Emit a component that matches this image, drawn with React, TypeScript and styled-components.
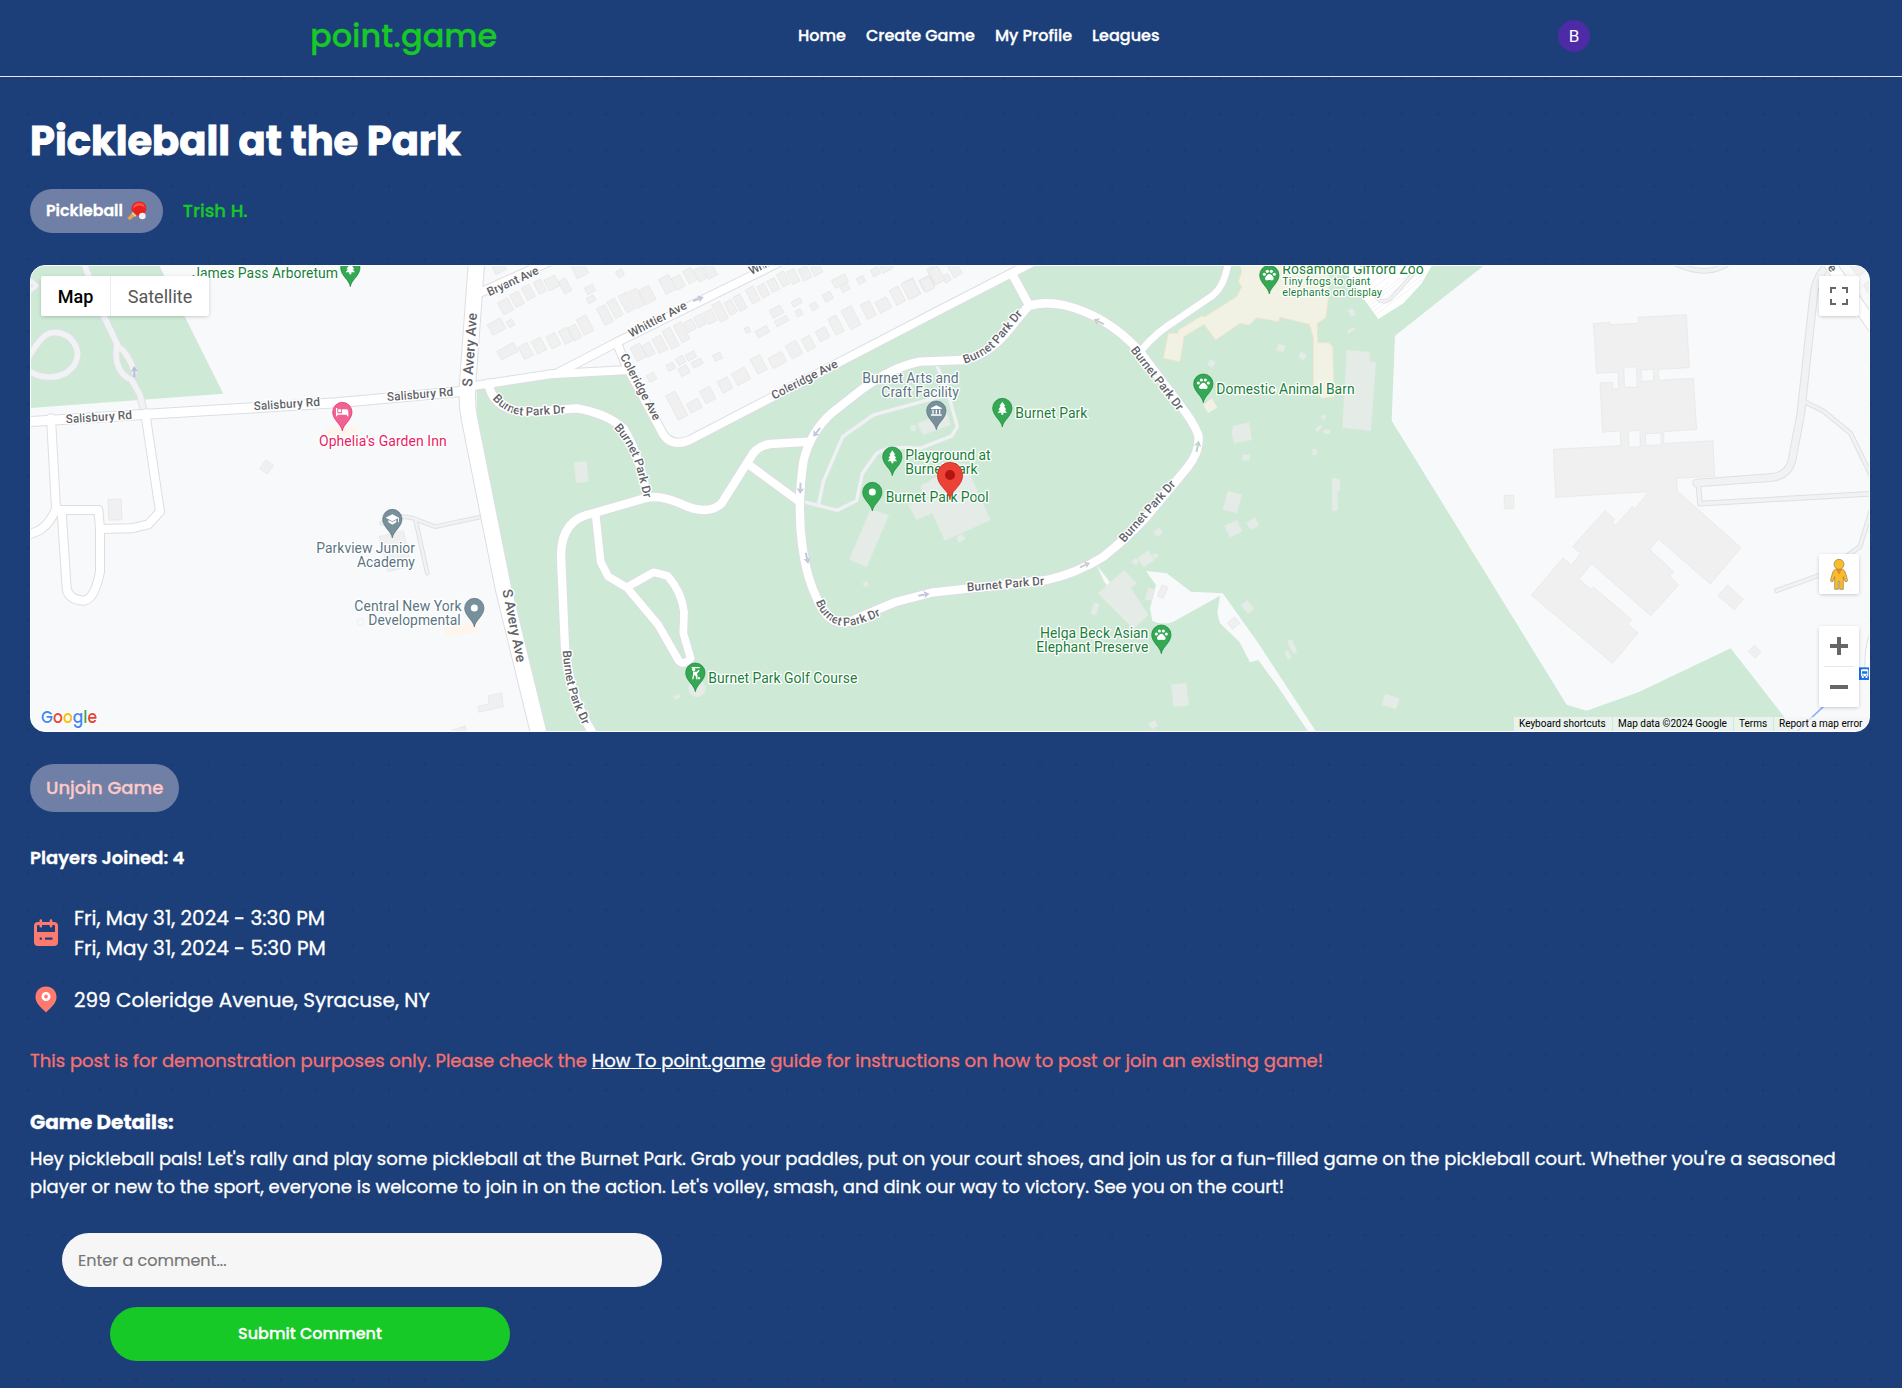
import React from 'react';
import styled, { createGlobalStyle, css } from 'styled-components';

const brand = {
  navy: '#1c3f79',
  green: '#16c926',
  coral: '#ff7a6e',
};

const GlobalStyle = createGlobalStyle`
  *, *::before, *::after { box-sizing: border-box; }
  body {
    margin: 0;
    background-color: ${brand.navy};
    background-image: radial-gradient(circle at 2px 2px, #19396f 1.2px, transparent 1.7px);
    background-size: 36.17px 36.17px;
    background-position: 25.5px 76px;
    color: #fff;
    font-family: Poppins, Inter, 'Open Sans', sans-serif;
    font-feature-settings: 'cv11';
    -webkit-text-stroke: 0.3px currentColor;
    min-height: 100vh;
  }
  button, input { font: inherit; color: inherit; border: 0; }
`;

/* ---------- header ---------- */

const Header = styled.header`
  background: ${brand.navy};
  border-bottom: 1px solid #e9eaf0;
  height: 77px;
  padding-bottom: 5px;
`;

const HeaderInner = styled.div`
  display: flex;
  align-items: center;
  width: 1280px;
  height: 100%;
  margin: 0 auto 0 310px;
`;

const Logo = styled.a`
  width: 188px;
  color: ${brand.green};
  font-size: 32px;
  font-weight: 500;
  line-height: 48px;
  white-space: nowrap;
`;

const Nav = styled.nav`
  display: flex;
  gap: 20px;
  margin-left: 300px;
  font-size: 16px;
  font-weight: 500;
  line-height: 24px;
  white-space: nowrap;
`;

const NavLink = styled.a`
  color: #fff;
`;

const Avatar = styled.div`
  display: grid;
  place-items: center;
  width: 32px;
  height: 32px;
  margin-left: auto;
  border-radius: 50%;
  background: #4d2ba6;
  font: 400 17px/32px Roboto, sans-serif;
  -webkit-text-stroke: 0;
`;

/* ---------- page body ---------- */

const Page = styled.main`
  display: flex;
  flex-direction: column;
  align-items: flex-start;
  padding: 34px 32px 27px 30px;
`;

const Title = styled.h1`
  margin: 0;
  font-size: 40px;
  font-weight: 700;
  line-height: 60px;
  -webkit-text-stroke: 0.9px currentColor;
`;

const TagRow = styled.div`
  display: flex;
  align-items: center;
  gap: 20px;
  margin-top: 18px;
`;

const pill = css`
  display: flex;
  align-items: center;
  border-radius: 24px;
  background: rgba(238, 225, 233, 0.4);
  padding: 0 16px 1px;
  white-space: nowrap;
`;

const SportTag = styled.span`
  ${pill}
  gap: 4px;
  height: 44px;
  font-size: 15.75px;
  font-weight: 600;
`;

const Host = styled.a`
  padding-bottom: 2px;
  color: ${brand.green};
  font-size: 18px;
  font-weight: 500;
`;

const UnjoinButton = styled.button`
  ${pill}
  height: 48px;
  margin-top: 32px;
  color: #fcc9c9;
  font-size: 18px;
  font-weight: 500;
`;

const Players = styled.p`
  margin: 32px 0 0;
  font-size: 18px;
  font-weight: 600;
  line-height: 27px;
`;

const InfoRow = styled.div<{ $top: number }>`
  display: flex;
  align-items: center;
  gap: 13px;
  margin-top: ${(p) => p.$top}px;
  font-size: 20px;
  line-height: 30px;
`;

const Notice = styled.p`
  margin: 32px 0 0;
  color: #f87171;
  font-size: 18px;
  line-height: 27px;
`;

const GuideLink = styled.a`
  color: #fff;
  text-decoration: underline;
`;

const DetailsHeading = styled.h2`
  margin: 33px 0 0;
  font-size: 20px;
  font-weight: 700;
  line-height: 30px;
`;

const Details = styled.p`
  margin: 8px 0 0;
  font-size: 18px;
  line-height: 28px;
`;

const CommentForm = styled.form`
  display: flex;
  flex-direction: column;
  gap: 20px;
  width: 600px;
  margin: 32px 0 0 32px;
`;

const CommentInput = styled.input`
  height: 54px;
  padding: 0 16px;
  border-radius: 27px;
  background: #f6f6f6;
  font-size: 16px;
  &::placeholder { color: #757575; opacity: 1; -webkit-text-stroke: 0.15px #757575; }
`;

const SubmitButton = styled.button`
  width: 400px;
  height: 54px;
  margin-left: 48px;
  padding-bottom: 2px;
  border-radius: 27px;
  background: ${brand.green};
  font-size: 16px;
  font-weight: 500;
`;

/* ---------- map ---------- */

const MapFrame = styled.section`
  position: relative;
  width: 100%;
  height: 467px;
  margin-top: 32px;
  overflow: hidden;
  border: 1px solid #fff;
  border-radius: 15px;
  background: #f8f9fb;
  font-family: Roboto, sans-serif;
  font-feature-settings: normal;
  -webkit-text-stroke: 0;
`;

const MapCanvas = styled.svg`
  display: block;
  width: 1838px;
  height: 465px;
`;

const controlSurface = css`
  position: absolute;
  background: #fff;
  border-radius: 2px;
  box-shadow: 0 1px 4px -1px rgba(0, 0, 0, 0.3);
`;

const MapTypeBar = styled.div`
  ${controlSurface}
  top: 10px;
  left: 10px;
  display: flex;
  height: 40px;
`;

const MapTypeButton = styled.button<{ $active?: boolean }>`
  width: ${(p) => (p.$active ? 69 : 99)}px;
  padding: 0;
  background: none;
  color: ${(p) => (p.$active ? '#000' : '#565656')};
  font-size: 18px;
  font-weight: ${(p) => (p.$active ? 500 : 400)};
  border-left: ${(p) => (p.$active ? 'none' : '1px solid #ececec')};
`;

const ControlButton = styled.div<{ $top: number }>`
  ${controlSurface}
  top: ${(p) => p.$top}px;
  right: 10px;
  display: grid;
  place-items: center;
  width: 40px;
  height: 40px;
`;

const ZoomControl = styled.div`
  ${controlSurface}
  top: 360px;
  right: 10px;
  display: grid;
  grid-template-rows: 40px 1px 40px;
  place-items: center;
  width: 40px;
`;

const ZoomRule = styled.div`
  width: 30px;
  height: 1px;
  background: #e6e6e6;
`;

const Attribution = styled.div`
  position: absolute;
  right: 0;
  bottom: 0;
  display: flex;
  gap: 1px;
  height: 14px;
  color: #000;
  font-size: 10px;
  line-height: 14px;
  white-space: nowrap;
`;

const Credit = styled.span<{ $w: number }>`
  width: ${(p) => p.$w}px;
  padding-left: 5px;
  background: rgba(245, 245, 245, 0.7);
`;

const PARK = '#ceead6';
const ROAD_TEXT = '#5f6368';

type Box = [number, number, number, number, number?];

/* The canvas is split in four sheets, each drawn at three units per pixel. */
const SHEETS = { west: 20, park: 460, zoo: 900, east: 1380 };
type SheetName = keyof typeof SHEETS;

const Sheet = ({ at, children }: { at: SheetName; children: React.ReactNode }) => (
  <g transform={`translate(${SHEETS[at]} 255) scale(0.33333)`}>{children}</g>
);

type Road = { at: SheetName; d: string; w: number; kind?: 'street' | 'lane' | 'path' };

const ROADS: Road[] = [
  { at: 'west', d: 'M25 308C70 232 90 230 112 233C165 240 175 290 172 305C165 350 120 366 90 366Q55 366 30 350', w: 17, kind: 'lane' },
  { at: 'west', d: 'M190 20L250 180L295 275Q325 295 343 350', w: 17, kind: 'lane' },
  { at: 'west', d: 'M290 275Q280 350 335 375L360 420L373 475', w: 17, kind: 'lane' },
  { at: 'west', d: 'M30 75L50 92L30 108', w: 12, kind: 'lane' },
  { at: 'west', d: 'M1085 805Q1130 775 1180 790L1245 815L1395 783', w: 8, kind: 'lane' },
  { at: 'west', d: 'M1187 797L1222 955', w: 8, kind: 'lane' },
  { at: 'zoo', d: 'M60 580L155 543L172 515L140 400L112 335', w: 9, kind: 'path' },
  { at: 'park', d: 'M1030 740L1132 766L1190 737L1207 655L1250 595Q1290 570 1380 580', w: 9, kind: 'path' },
  { at: 'park', d: 'M1075 752L1090 680L1148 545L1240 480L1440 425', w: 9, kind: 'path' },
  { at: 'east', d: 'M885 25Q980 70 1045 25', w: 11, kind: 'lane' },
  { at: 'east', d: 'M1355 20Q1305 60 1300 130L1262 480L1235 620Q1222 664 1170 668L950 684', w: 20, kind: 'lane' },
  { at: 'east', d: 'M955 692L960 746L1475 716', w: 11, kind: 'lane' },
  { at: 'east', d: 'M1273 440L1330 468L1412 535L1475 665', w: 9, kind: 'lane' },
  { at: 'east', d: 'M1475 760L1440 875L1320 960L1190 1007', w: 9, kind: 'lane' },
  { at: 'east', d: 'M1490 1120Q1465 1160 1466 1240', w: 20 },
  { at: 'east', d: 'M1345 20L1480 215', w: 34 },
  { at: 'west', d: 'M93 490L108 760Q95 800 60 825L20 842', w: 24 },
  { at: 'west', d: 'M108 765L235 765L240 820L240 950Q225 1030 193 1037Q145 1035 140 1000L125 770', w: 24 },
  { at: 'west', d: 'M240 822L335 820L385 808L420 770L376 475', w: 24 },
  { at: 'west', d: 'M20 500L380 478L950 443L1340 408', w: 27 },
  { at: 'park', d: 'M28 395L270 358L505 345', w: 24 },
  { at: 'park', d: 'M290 356L470 262L900 50L990 5', w: 24 },
  { at: 'park', d: 'M40 122L290 10', w: 24 },
  { at: 'park', d: 'M470 262L500 335L605 530Q630 580 690 555L1440 165L1780 -10', w: 24 },
  { at: 'park', d: 'M85 385Q100 470 210 470L350 460Q440 475 490 520Q540 600 562 728', w: 25 },
  { at: 'park', d: 'M405 1445Q330 1330 315 1180L303 900Q305 790 400 775L560 728Q600 720 660 745Q740 785 785 745L870 610Q890 572 930 567L1050 560', w: 25 },
  { at: 'park', d: 'M865 628L1018 740', w: 24 },
  { at: 'park', d: 'M407 780L422 920L445 965L500 997L595 1110L655 1215Q670 1235 692 1210L670 1135L672 1070Q665 1010 622 962L580 952L500 997', w: 23 },
  { at: 'zoo', d: 'M385 153L330 220Q270 300 190 315L60 320Q-20 335 -110 400L-200 470Q-270 530 -290 620Q-310 760 -292 880Q-280 970 -245 1040Q-210 1115 -150 1100Q-60 1060 -10 1040L100 1012L440 975Q530 955 610 905Q680 850 740 785L860 640Q902 590 895 540Q880 500 840 450L720 290Q620 180 490 150Q430 138 385 153Z', w: 25 },
  { at: 'zoo', d: 'M387 150L335 55', w: 25 },
  { at: 'zoo', d: 'M722 288Q770 230 830 195L940 120Q975 90 985 20', w: 20 },
  { at: 'park', d: 'M50 15L24 370Q18 440 28 490L130 1000L240 1450', w: 46 },
];

const casing = { street: '#dcdee3', lane: '#dfe0e4', path: '#e6ebe8' };
const surface = { street: '#ffffff', lane: '#f1f2f4', path: '#f0f1f4' };

const Roads = () => (
  <>
    {(['path', 'lane', 'street'] as const).map((kind) => (
      <g key={kind} fill="none" strokeLinejoin="round" strokeLinecap="round">
        {[6, 0].map((edge) =>
          ROADS.filter((r) => (r.kind ?? 'street') === kind).map((r, i) => (
            <Sheet key={`${edge}-${i}`} at={r.at}>
              <path
                d={r.d}
                stroke={edge ? casing[kind] : surface[kind]}
                strokeWidth={r.w + (kind === 'path' ? edge / 3 : edge)}
              />
            </Sheet>
          )),
        )}
      </g>
    ))}
  </>
);

const HOUSES: Box[] = [
  [137, 154, 34, 40], [171, 133, 28, 42], [205, 112, 26, 42], [240, 95, 24, 40], [276, 84, 36, 36], [315, 93, 24, 42],
  [360, 45, 38, 40], [118, 40, 36, 24], [110, 215, 44, 36], [152, 205, 18, 20], [390, 103, 26, 22], [393, 133, 24, 18], [480, 55, 20, 20],
  [142, 289, 56, 30], [197, 288, 30, 42], [237, 272, 30, 42], [280, 257, 30, 40], [318, 242, 28, 44], [345, 232, 24, 44], [375, 210, 32, 52],
  [435, 180, 28, 56], [465, 160, 26, 56], [500, 142, 28, 56], [530, 130, 26, 56], [562, 120, 34, 48], [622, 88, 34, 50], [655, 82, 28, 38],
  [690, 62, 26, 42], [720, 58, 24, 40], [750, 48, 30, 40],
  [535, 292, 32, 46], [565, 284, 26, 38], [600, 268, 28, 48], [632, 250, 26, 62], [665, 232, 26, 58], [690, 212, 28, 32], [720, 197, 26, 34],
  [750, 185, 28, 38], [780, 170, 26, 58], [812, 157, 24, 42], [840, 143, 24, 48], [878, 120, 26, 48], [910, 107, 24, 38], [940, 90, 24, 38],
  [970, 72, 24, 42], [1000, 65, 24, 42], [1035, 55, 28, 38], [1070, 45, 28, 28],
  [575, 367, 24, 22], [632, 335, 22, 20], [662, 316, 24, 22], [693, 303, 28, 20], [712, 324, 32, 18], [672, 347, 28, 26], [773, 305, 24, 20],
  [862, 225, 14, 16], [907, 230, 38, 22], [950, 170, 36, 26], [965, 198, 40, 18], [1010, 142, 30, 16], [1017, 173, 18, 18], [1062, 154, 20, 20],
  [1103, 125, 26, 24], [1140, 78, 44, 26], [1155, 98, 24, 20], [1203, 75, 22, 20], [1247, 50, 24, 22], [1280, 38, 34, 20],
  [650, 452, 32, 82], [703, 452, 38, 30], [743, 420, 34, 42], [795, 390, 34, 38], [843, 364, 44, 40], [896, 328, 32, 50], [952, 315, 46, 34],
  [1002, 284, 36, 44], [1045, 265, 28, 40], [1088, 238, 32, 34], [1128, 210, 28, 54], [1173, 188, 34, 64], [1225, 165, 30, 48], [1270, 150, 38, 36],
  [1312, 122, 30, 50], [1355, 100, 34, 54], [1400, 85, 36, 36], [1425, 58, 30, 50], [1460, 70, 20, 22],
];

const ZOO_HOUSES: Box[] = [[32, 102, 38, 52], [82, 88, 30, 40], [110, 62, 32, 46], [165, 45, 28, 38]];

const PARK_SHEDS: Box[] = [
  [934, 325, 18, 18, 30], [1143, 279, 22, 20, 20], [1208, 303, 20, 18, 30], [1038, 608, 22, 17, 0], [997, 741, 44, 58, 15],
  [1000, 821, 42, 38, -25], [1058, 806, 30, 26, -30], [1270, 487, 14, 12, 40], [1256, 520, 10, 22, 40], [1281, 530, 18, 13, 0],
  [1244, 591, 13, 18, 0], [1355, 172, 16, 22, -30], [1353, 226, 24, 9, -30], [774, 832, 22, 18, -40], [738, 912, 40, 34, -35],
  [706, 920, 16, 16, 30], [766, 902, 14, 14, -35], [585, 1062, 17, 36, 15], [750, 1018, 20, 36, 15], [1043, 1056, 24, 34, -40],
  [1177, 1174, 14, 42, -25], [1164, 1200, 12, 26, -25], [840, 1320, 46, 68, -6], [760, 1409, 22, 20, -30], [1472, 1340, 44, 34, 18],
  [182, 850, 22, 18, -30], [40, 519, 16, 18, 15],
];

const Boxes = ({ list, tilt = 0 }: { list: Box[]; tilt?: number }) => (
  <>
    {list.map(([cx, cy, w, h, r], i) => (
      <rect key={i} x={cx - w / 2} y={cy - h / 2} width={w} height={h} transform={`rotate(${r ?? tilt} ${cx} ${cy})`} />
    ))}
  </>
);

const Terrain = () => (
  <>
    <Sheet at="west"><path d="M20 20L412 20L610 416L20 460Z" fill={PARK} /></Sheet>
    <Sheet at="park">
      <path
        d="M500 350L605 530L690 565L1440 165L1650 55L1710 20L3085 20L3070 33L2805 242L2795 497L3320 1349L3380 1367L3535 1312L3812 1180L4015 1440L262 1440L130 940L50 480L50 390L270 358Z"
        fill={PARK}
      />
    </Sheet>
    <Sheet at="zoo">
      <path d="M1018 20L1025 50L1015 80L1025 95L1010 125L915 185L905 183L835 225L833 235L805 235L790 310L840 320L852 245L912 208L947 255L1020 205L1048 210L1070 188L1135 200L1140 187L1228 208L1240 245L1240 400L1265 430L1303 425L1298 275L1285 263L1253 263L1252 205L1278 188L1285 130L1290 20Z" fill="#f1f2e3" stroke="#f6e2c2" strokeWidth="2" />
      <path d="M910 450L935 430L952 457L925 475Z" fill="#f1f2e3" />
      <path d="M1325 20L1345 60L1390 130L1435 192L1510 145L1565 85L1602 20Z" fill="#fff" />
      <g stroke="#e3e4e6" strokeWidth="1.5" fill="none">
        <path d="M1400 135L1470 80M1405 143L1500 70M1410 151L1540 50M1416 160L1570 40M1422 168L1575 55M1428 178L1565 75M1350 60L1400 20M1360 75L1430 20M1370 92L1460 22M1380 108L1490 25M1388 122L1520 25" />
        <path d="M1425 120Q1445 155 1475 128L1555 40" stroke="#dfe0e4" strokeWidth="12" />
        <path d="M1425 120Q1445 155 1475 128L1555 40" stroke="#f1f2f4" strokeWidth="7" />
      </g>
      <path d="M738 948L800 955L873 1010L968 1015L1075 1165L1255 1440L1232 1440L1130 1290L1075 1215L1050 1222L1018 1160L960 1105L952 1075L960 1022L820 1100Q790 1112 757 1098L750 1060L768 990Z" fill="#f8f9fb" />
      <path d="M590 930L632 985L625 998L610 975Z" fill="#f8f9fb" />
    </Sheet>
  </>
);

const Buildings = () => (
  <>
    <g fill="#f0f0f0" stroke="#e4e5e6" strokeWidth="2">
      <Sheet at="park">
        <Boxes list={HOUSES} tilt={-28} />
        <path d="M85 1322L125 1314L130 1355L57 1372L54 1354L86 1347ZM0 1418L16 1412L18 1440L0 1440Z" />
      </Sheet>
      <Sheet at="zoo"><Boxes list={ZOO_HOUSES} tilt={-28} /></Sheet>
      <Sheet at="west">
        <Boxes list={[[740, 636, 28, 32, 35], [285, 764, 40, 62, -2]]} />
        <path d="M1077 845L1150 827L1168 905L1168 935L1103 950L1095 910Z" />
        <path d="M1295 1425L1336 1414L1340 1440L1290 1440Z" />
      </Sheet>
      <Sheet at="east">
        <path
          fillRule="evenodd"
          d="M640 206L690 202L690 209L775 205L775 187L919 179L928 338L836 343L836 376L940 370L950 523L851 530L851 566L999 557L1004 663L890 670L892 708L1083 878L991 987L836 852L808 883L881 950L868 963L896 990L812 1082L635 926L596 972L632 1003L640 996L755 1094L742 1107L774 1134L698 1225L454 1021L549 909L574 930L602 895L578 875L675 767L704 793L696 802L707 811L757 755L765 761L806 710L527 727L520 583L723 572L720 528L668 532L660 384L697 382L699 403L716 400L714 351L650 355ZM731 337L769 335L772 397L734 397ZM784 345L820 343L821 377L785 380ZM745 528L780 526L781 575L747 577ZM796 536L843 534L844 570L797 572Z"
        />
        <path d="M373 721H401V761H373ZM1042 990L1090 1033L1063 1064L1014 1022ZM1122 1171L1143 1190L1127 1209L1104 1190ZM1410 33L1435 65L1475 35ZM1450 90L1465 78L1480 110L1462 112Z" />
      </Sheet>
    </g>
    <g fill="#fef5ec">
      <Sheet at="west"><path d="M917 518H1010V543H917ZM1272 1120L1370 1098L1370 1133L1310 1143L1303 1128L1300 1140L1277 1145Z" /></Sheet>
    </g>
    <g fill="#e5ece7" stroke="#dfe6e1" strokeWidth="1">
      <Sheet at="park">
        <Boxes list={[[364, 651, 38, 62, -6], [651, 1326, 20, 11, -25], [1217, 988, 14, 13, -20]]} />
        <path d="M1232 762L1287 780L1220 937L1167 913Z" />
        <circle cx="711" cy="1300" r="26" />
      </Sheet>
      <Sheet at="zoo">
        <Boxes list={PARK_SHEDS} />
        <path d="M62 692L110 665L112 630L195 625L272 795L135 857L115 815L97 775L48 795L25 750L70 730Z" />
        <path d="M52 505L140 470L152 510L68 540Z" />
        <path d="M1000 512L1048 502L1056 555L1003 565L994 530Z" />
        <path d="M1296 668L1320 672L1320 705L1313 710L1313 767L1296 767Z" />
        <path d="M1340 284L1410 291L1408 318L1428 322L1413 528L1327 518Z" />
        <path d="M593 1015L672 945L710 985L692 998L745 1080L700 1122Z" />
      </Sheet>
    </g>
    <g fill="#f0f0f0" stroke="#dcdcdc" strokeWidth="1.5">
      <Sheet at="zoo"><Boxes list={[[788, 1010, 18, 36, 25], [1001, 1104, 28, 24, -40]]} /></Sheet>
    </g>
    <Sheet at="east">
      <path d="M1250 1430L1330 1355" stroke="#8ab4f8" strokeWidth="5" />
      <rect x="1437" y="1237" width="34" height="38" fill="#1a73e8" />
      <path d="M1447 1243h14q4 0 4 4v17h-3v5h-5v-5h-6v5h-5v-5h-3v-17q0-4 4-4z" fill="#fff" />
      <path d="M1446 1249h16v7h-16zM1447 1259h4v3h-4zM1458 1259h4v3h-4z" fill="#1a73e8" />
    </Sheet>
  </>
);

const Arrow = ({ x, y, r, c = '#c3c7dc' }: { x: number; y: number; r: number; c?: string }) => (
  <g transform={`translate(${x} ${y}) rotate(${r})`} fill={c}>
    <path d="M-17 -3H2V3H-17ZM0 -11L17 0L0 11L3 0Z" />
  </g>
);

/* ---------- labels and markers ---------- */

type Glyph = 'tree' | 'paw' | 'dot' | 'bed' | 'cap' | 'museum' | 'golf';

const GLYPHS: Record<Glyph, React.ReactNode> = {
  tree: <path d="M0 -19L9 -6H5L12 5H7L14 14H3V20H-3V14H-14L-7 5H-12L-5 -6H-9Z" />,
  paw: (
    <>
      <circle cx="-15" cy="-2" r="4.6" /><circle cx="-6" cy="-11" r="4.8" /><circle cx="6" cy="-11" r="4.8" /><circle cx="15" cy="-2" r="4.6" />
      <path d="M0 -3C6 -3 8 3 12 7C15 12 11 17 6 16Q0 14 -6 16C-11 17 -15 12 -12 7C-8 3 -6 -3 0 -3Z" />
    </>
  ),
  dot: <circle r="10.5" />,
  bed: <path d="M-19 -12H-15V4H-1V-8H12Q18 -8 18 -1V13H14V8H-15V13H-19ZM-8 -9A5 5 0 1 1 -8 1A5 5 0 1 1 -8 -9Z" />,
  cap: <path d="M0 -14L20 -4V10H17V-2L0 7L-20 -4ZM-12 3L0 9L12 3V10L0 17L-12 10Z" />,
  museum: <path d="M0 -16L16 -8V-5H-16V-8ZM-12 -3H-8V9H-12ZM-2 -3H2V9H-2ZM8 -3H12V9H8ZM-16 11H16V15H-16Z" />,
  golf: <path d="M-11 -17H13V-13H-2A5 5 0 1 1 -8 -13H-11ZM-7 -3H4L10 -9L13 -6L5 3L7 9L6 20H2L1 10L-3 7L-6 20H-10L-7 6ZM11 13A3.5 3.5 0 1 1 11 20A3.5 3.5 0 1 1 11 13Z" />,
};

const Pin = ({ x, y, color, edge, glyph }: { x: number; y: number; color: string; edge: string; glyph: Glyph }) => (
  <g transform={`translate(${x} ${y})`}>
    <path d="M0 57C-3 36 -29 24 -29 0A29 29 0 1 1 29 0C29 24 3 36 0 57Z" fill={color} stroke={edge} strokeWidth="2" />
    <g fill="#fff">{GLYPHS[glyph]}</g>
  </g>
);

const GREEN = { color: '#34a853', edge: '#188038' };
const SLATE = { color: '#78909c', edge: '#546e7a' };

const MapText = styled.text<{ $tone: string; $size?: number; $weight?: number }>`
  fill: ${(p) => p.$tone};
  font-size: ${(p) => p.$size ?? 42}px;
  font-weight: ${(p) => p.$weight ?? 400};
  stroke: #fff;
  stroke-width: 8px;
  stroke-linejoin: round;
  paint-order: stroke;
`;

const Poi = ({ x, y, w, tone, size, children }: { x: number; y: number; w: number; tone: string; size?: number; children: string }) => (
  <MapText x={x} y={y} textLength={w} $tone={tone} $size={size}>{children}</MapText>
);

const RoadName = ({ id, d, size = 36, w, children }: { id: string; d: string; size?: number; w: number; children: string }) => (
  <>
    <path id={id} d={d} fill="none" />
    <MapText $tone={ROAD_TEXT} $size={size} $weight={500}>
      <textPath href={`#${id}`} textLength={w}>{children}</textPath>
    </MapText>
  </>
);

const forest = '#188038';
const slate = '#5b7583';

const Labels = () => (
  <>
    <Sheet at="west">
      <Arrow x={343} y={350} r={-90} c="#b9bedb" />
      <RoadName id="sal1" d="M138 505L343 491" w={199}>Salisbury Rd</RoadName>
      <RoadName id="sal2" d="M702 466L906 452" w={199}>Salisbury Rd</RoadName>
      <RoadName id="sal3" d="M1102 438L1310 421" w={199}>Salisbury Rd</RoadName>
      <Poi x={517} y={69} w={437} tone={forest}>James Pass Arboretum</Poi>
      <Pin x={991} y={38} {...GREEN} glyph="tree" />
      <Poi x={897} y={573} w={383} tone="#e91e63">Ophelia's Garden Inn</Poi>
      <Pin x={967} y={471} color="#f06292" edge="#e91e63" glyph="bed" />
      <Poi x={889} y={894} w={296} tone={slate}>Parkview Junior</Poi>
      <Poi x={1011} y={936} w={174} tone={slate}>Academy</Poi>
      <Pin x={1117} y={792} {...SLATE} glyph="cap" />
      <Poi x={1003} y={1068} w={322} tone={slate}>Central New York</Poi>
      <Poi x={1045} y={1110} w={277} tone={slate}>Developmental</Poi>
      <Pin x={1363} y={1059} {...SLATE} glyph="dot" />
      <circle cx="1022" cy="1101" r="10" fill="none" stroke="#e4e5e6" strokeWidth="1.5" />
    </Sheet>
    <Sheet at="park">
      <Arrow x={715} y={132} r={-20} />
      <Arrow x={1070} y={532} r={128} />
      <Arrow x={1021} y={700} r={92} />
      <Arrow x={1041} y={910} r={78} />
      <RoadName id="avery1" d="M36 396L52 165" size={42} w={222}>S Avery Ave</RoadName>
      <RoadName id="avery2" d="M127 1006L173 1237" size={42} w={222}>S Avery Ave</RoadName>
      <RoadName id="bryant" d="M88 124L250 50" w={166}>Bryant Ave</RoadName>
      <RoadName id="whittier" d="M513 248L700 150" w={192}>Whittier Ave</RoadName>
      <RoadName id="whittier2" d="M874 60L970 13" w={96}>Whittie</RoadName>
      <RoadName id="cole1" d="M479 304L588 510" w={220}>Coleridge Ave</RoadName>
      <RoadName id="cole2" d="M942 434L1160 322" w={218}>Coleridge Ave</RoadName>
      <RoadName id="bpd1" d="M97 432C128 466 160 484 215 482L345 472" w={234}>Burnet Park Dr</RoadName>
      <RoadName id="bpd2" d="M461 518C515 580 528 630 536 665L556 745" w={234}>Burnet Park Dr</RoadName>
      <RoadName id="bpd3" d="M308 1187C313 1270 330 1330 350 1370L388 1455" w={234}>Burnet Park Dr</RoadName>
      <RoadName id="bpd4" d="M1068 1040C1082 1085 1125 1118 1165 1113C1210 1107 1250 1088 1300 1062" w={234}>Burnet Park Dr</RoadName>
      <Poi x={1277} y={741} w={309} tone={forest}>Burnet Park Pool</Poi>
      <Poi x={1336} y={616} w={256} tone={forest}>Playground at</Poi>
      <Poi x={1336} y={657} w={217} tone={forest}>Burnet Park</Poi>
      <Poi x={1207} y={384} w={289} tone={slate}>Burnet Arts and</Poi>
      <Poi x={1264} y={426} w={233} tone={slate}>Craft Facility</Poi>
      <Pin x={1297} y={605} {...GREEN} glyph="tree" />
      <Pin x={1237} y={711} {...GREEN} glyph="dot" />
      <Pin x={1429} y={467} {...SLATE} glyph="museum" />
      <Poi x={745} y={1284} w={447} tone={forest}>Burnet Park Golf Course</Poi>
      <Pin x={706} y={1253} {...GREEN} glyph="golf" />
    </Sheet>
    <Sheet at="zoo">
      <Arrow x={596} y={200} r={205} c="#c9cccb" />
      <Arrow x={893} y={574} r={-78} c="#b7d3c4" />
      <Arrow x={555} y={930} r={-24} c="#cccdd0" />
      <Arrow x={72} y={1019} r={-10} />
      <RoadName id="bpd5" d="M194 326Q260 305 300 260L378 165" w={234}>Burnet Park Dr</RoadName>
      <RoadName id="bpd6" d="M691 286L841 478" w={232}>Burnet Park Dr</RoadName>
      <RoadName id="bpd7" d="M673 864L836 680" w={234}>Burnet Park Dr</RoadName>
      <RoadName id="bpd8" d="M202 1009L440 989" w={232}>Burnet Park Dr</RoadName>
      <Pin x={307} y={459} {...GREEN} glyph="tree" />
      <Poi x={346} y={489} w={216} tone={forest}>Burnet Park</Poi>
      <Pin x={910} y={386} {...GREEN} glyph="paw" />
      <Poi x={949} y={417} w={415} tone={forest}>Domestic Animal Barn</Poi>
      <Pin x={1108} y={60} {...GREEN} glyph="paw" />
      <Poi x={1147} y={57} w={424} tone={forest}>Rosamond Gifford Zoo</Poi>
      <Poi x={1147} y={89} w={264} tone={forest} size={33}>Tiny frogs to giant</Poi>
      <Poi x={1147} y={122} w={299} tone={forest} size={33}>elephants on display</Poi>
      <Pin x={784} y={1139} {...GREEN} glyph="paw" />
      <Poi x={420} y={1149} w={325} tone={forest}>Helga Beck Asian</Poi>
      <Poi x={409} y={1191} w={336} tone={forest}>Elephant Preserve</Poi>
      <path d="M150 734C146 704 112 694 112 660A38 38 0 1 1 188 660C188 694 154 704 150 734Z" fill="#ea4335" stroke="#c5221f" strokeWidth="2" />
      <circle cx="150" cy="660" r="15" fill="#b31412" />
    </Sheet>
    <Sheet at="east">
      <RoadName id="avenue" d="M1318 2L1360 64" size={36} w={62}>Ave</RoadName>
    </Sheet>
  </>
);

const LogoText = styled.text`
  font: 500 17px Poppins, Inter, sans-serif;
  stroke: #fff;
  stroke-width: 2px;
  paint-order: stroke;
`;

const GoogleMark = () => (
  <LogoText x="41" y="723" textLength="56" lengthAdjust="spacingAndGlyphs">
    <tspan fill="#4285f4">G</tspan><tspan fill="#ea4335">o</tspan><tspan fill="#fbbc04">o</tspan>
    <tspan fill="#4285f4">g</tspan><tspan fill="#34a853">l</tspan><tspan fill="#ea4335">e</tspan>
  </LogoText>
);

const GameMap = () => (
  <MapFrame>
    <MapCanvas viewBox="31 266 1838 465">
      <Terrain />
      <Roads />
      <Buildings />
      <Labels />
      <GoogleMark />
    </MapCanvas>
    <MapTypeBar>
      <MapTypeButton $active>Map</MapTypeButton>
      <MapTypeButton>Satellite</MapTypeButton>
    </MapTypeBar>
    <ControlButton $top={10}>
      <svg width="18" height="18" viewBox="0 0 18 18" fill="#666">
        <path d="M0 0h6v2H2v4H0zM12 0h6v6h-2V2h-4zM0 12h2v4h4v2H0zM16 12h2v6h-6v-2h4z" />
      </svg>
    </ControlButton>
    <ControlButton $top={288}>
      <svg width="18" height="32" viewBox="0 0 54 96">
        <g fill="#fbbc2c" stroke="#8d7a52" strokeWidth="2">
          <path d="M16 34Q9 36 6 50L1 68Q4 74 9 70L14 56V94H25V70H29V94H40V56L45 70Q50 74 53 68L48 50Q45 36 38 34Z" />
          <circle cx="27" cy="19" r="15" />
        </g>
        <path d="M18 34H36L27 50Z" fill="#e58a2a" />
      </svg>
    </ControlButton>
    <ZoomControl>
      <svg width="18" height="18" viewBox="0 0 18 18" fill="#666"><path d="M7 0h4v7h7v4h-7v7H7v-7H0V7h7z" /></svg>
      <ZoomRule />
      <svg width="18" height="18" viewBox="0 0 18 18" fill="#666"><path d="M0 7h18v4H0z" /></svg>
    </ZoomControl>
    <Attribution>
      <Credit $w={98}>Keyboard shortcuts</Credit>
      <Credit $w={120}>Map data ©2024 Google</Credit>
      <Credit $w={39}>Terms</Credit>
      <Credit $w={95}>Report a map error</Credit>
    </Attribution>
  </MapFrame>
);

/* ---------- small icons ---------- */

const PaddleIcon = () => (
  <svg width="20" height="20" viewBox="0 0 60 60">
    <path d="M18 34L27 43L8 58L1 51Z" fill="#e8a14c" />
    <path d="M17 33L29 44L24 47L14 37Z" fill="#f6cf8a" />
    <path d="M14 28C12 10 26 0 40 2C54 3 60 14 57 27C54 40 42 44 30 44Z" fill="#e8231f" />
    <path d="M18 24C18 10 30 4 40 6C50 8 54 14 53 20C44 10 28 12 18 24Z" fill="#ff5347" />
    <circle cx="46" cy="45" r="10" fill="#f3f1f2" />
  </svg>
);

const CalendarIcon = () => (
  <svg width="31" height="32" viewBox="0 0 31 32">
    <path
      fill={brand.coral}
      fillRule="evenodd"
      d="M9.500 3.500a1.300 1.300 0 0 1 2.600 0V5h7.600V3.500a1.300 1.300 0 0 1 2.600 0V5H24a4 4 0 0 1 4 4v16a4 4 0 0 1-4 4H8a4 4 0 0 1-4-4V9a4 4 0 0 1 4-4h1.500zM7 9.200V15h18V9.200Q25 8 23.800 8H22.300v1.200a1.300 1.300 0 0 1-2.600 0V8h-7.600v1.200a1.300 1.300 0 0 1-2.600 0V8H8.200Q7 8 7 9.200ZM9.700 20.500h2.200v2.200H9.700zM15 20.500h7.500v2.200H15z"
    />
  </svg>
);

const PlaceIcon = () => (
  <svg width="31" height="30" viewBox="0 0 31 30">
    <path fill={brand.coral} d="M16 1.500C9.800 1.500 5.500 6 5.500 12C5.500 18 10 21.500 16 27.500C22 21.500 26.500 18 26.500 12C26.500 6 22.200 1.500 16 1.500Z" />
    <circle cx="16" cy="11.500" r="3.200" fill="none" stroke="#fff" strokeWidth="2.600" />
  </svg>
);

const NAV_ITEMS = ['Home', 'Create Game', 'My Profile', 'Leagues'];

export default function App() {
  return (
    <>
      <GlobalStyle />
      <Header>
        <HeaderInner>
          <Logo>point.game</Logo>
          <Nav>
            {NAV_ITEMS.map((item) => (
              <NavLink key={item}>{item}</NavLink>
            ))}
          </Nav>
          <Avatar>B</Avatar>
        </HeaderInner>
      </Header>
      <Page>
        <Title>Pickleball at the Park</Title>
        <TagRow>
          <SportTag>Pickleball <PaddleIcon /></SportTag>
          <Host>Trish H.</Host>
        </TagRow>
        <GameMap />
        <UnjoinButton>Unjoin Game</UnjoinButton>
        <Players>Players Joined: 4</Players>
        <InfoRow $top={32}>
          <CalendarIcon />
          <div>
            <div>Fri, May 31, 2024 - 3:30 PM</div>
            <div>Fri, May 31, 2024 - 5:30 PM</div>
          </div>
        </InfoRow>
        <InfoRow $top={22}>
          <PlaceIcon />
          <span>299 Coleridge Avenue, Syracuse, NY</span>
        </InfoRow>
        <Notice>
          This post is for demonstration purposes only. Please check the <GuideLink>How To point.game</GuideLink> guide
          for instructions on how to post or join an existing game!
        </Notice>
        <DetailsHeading>Game Details:</DetailsHeading>
        <Details>
          Hey pickleball pals! Let's rally and play some pickleball at the Burnet Park. Grab your paddles, put on your
          court shoes, and join us for a fun-filled game on the pickleball court. Whether you're a seasoned player or
          new to the sport, everyone is welcome to join in on the action. Let's volley, smash, and dink our way to
          victory. See you on the court!
        </Details>
        <CommentForm>
          <CommentInput placeholder="Enter a comment..." />
          <SubmitButton type="button">Submit Comment</SubmitButton>
        </CommentForm>
      </Page>
    </>
  );
}
